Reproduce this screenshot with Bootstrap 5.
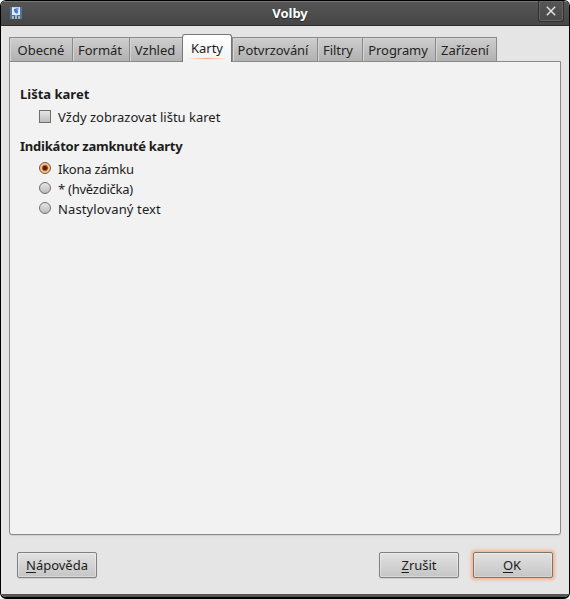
<!DOCTYPE html>
<html lang="cs">
<head>
<meta charset="utf-8">
<title>Volby</title>
<link href="https://cdn.jsdelivr.net/npm/bootstrap@5.3.0/dist/css/bootstrap.min.css" rel="stylesheet">
<style>
html{background:#fff}
body{background:transparent;font:13px/20px "Noto Sans","Open Sans",sans-serif;color:#1c1c1c}
.window{width:570px;height:599px;background:#e5e5e5;border:1px solid #000;border-bottom-width:2px;border-radius:6px}
.titlebar{height:25px;flex:none;background:linear-gradient(#555,#464646);border-top:1px solid #777;border-bottom:1px solid #2e2e2e}
.titlebar h1{font-size:13px;font-weight:700;line-height:23px;color:#fff;text-shadow:0 1px 1px #222;padding-left:10px}
.app-icon{left:8px;top:4px}
.close-btn{right:5px;top:-1px;width:26px;height:21px;padding:0;border:1px solid #303030;border-top:0;border-radius:0 0 3px 3px;background:transparent;box-shadow:inset 0 0 0 1px #646464}
.close-btn svg{display:block;margin:5px auto}
.main-area{padding:8px 8px 0}
.nav-tabs{height:28px;border:0;position:relative;z-index:1}
.nav-tabs .nav-item{flex:none}
.nav-tabs .nav-link{width:100%;height:25px;padding:0 2px 0 0;margin:0;line-height:24px;letter-spacing:-.05px;text-align:center;white-space:nowrap;color:#242424;border:1px solid #8a8a8a;border-right:0;border-radius:0;background:linear-gradient(#cecece,#b1b1b1);box-shadow:inset 1px 1px #d5d5d5}
.nav-tabs .nav-item:first-child .nav-link{padding-right:0}
.nav-tabs .w-e .nav-link,.nav-tabs .w-f .nav-link{padding-right:4px}
.nav-tabs .nav-item:last-child .nav-link{border-right:1px solid #8a8a8a}
.nav-tabs .nav-link.active{height:28px;line-height:27px;padding:0;color:#1c1c1c;background:linear-gradient(#fff,#f2f2f2);border:1px solid #777;border-bottom:0;border-radius:3px 3px 0 0;box-shadow:none;position:relative}
.nav-tabs .nav-link.active::after{content:"";position:absolute;left:4px;right:4px;bottom:3px;height:1px;background:linear-gradient(90deg,transparent,#ff9f85 50%,transparent)}
.w-a{width:63px}.w-b{width:57px}.w-c{width:53px}.w-d{width:50px}.w-e{width:85px}.w-f{width:45px}.w-g{width:73px}.w-h{width:62px}
.panel{height:474px;margin-top:-1px;padding:22px 10px;background:#f2f2f2;border:1px solid #8a8a8a;border-radius:0 0 3px 3px;box-shadow:0 1px 1px #cfcfcf}
.panel h2{font-size:13px;font-weight:700;line-height:20px;margin:0}
.panel h2.mt-2{padding-top:1px;letter-spacing:-.22px}
.option{height:20px;padding-left:19px;gap:7px}
.option-first{margin-top:3px}
.tight{letter-spacing:-.25px}.wide{letter-spacing:.12px}
.form-check-input{width:12px;height:12px;margin:0;flex:none;border:1px solid #6e6e6e;background:linear-gradient(#e6e6e6,#bdbdbd);position:relative;top:-1px}
.form-check-input[type=checkbox]{border-radius:0;height:13px;top:-.5px}
.form-check-input[type=radio]:checked{border-color:#6e5a50;background:radial-gradient(circle,#4f1e0a 0 1.5px,#a85524 2.6px,#ffc182 3.6px,#f9b980)}
.dialog-btn{width:80px;height:26px;padding:0;font-size:13px;line-height:24px;color:#1c1c1c;border:1px solid #808080;border-radius:2px;background:linear-gradient(#e2e2e2,#c5c5c5);box-shadow:inset 0 0 0 1px rgba(255,255,255,.35),0 1px 1px #d0d0d0}
.dialog-btn u{text-underline-offset:2px}
.dialog-btn.default{padding-right:2px;border-color:#7c7672;box-shadow:inset 0 0 0 1px rgba(255,255,255,.3),0 0 3px 1.5px #f7b58e}
.actions{padding:17px 8px 0;gap:14px}
.bottom-edge{height:3px;flex:none;background:#555}
</style>
</head>
<body>
<div class="window d-flex flex-column overflow-hidden">
  <header class="titlebar position-relative">
    <svg class="app-icon position-absolute" width="14" height="14" viewBox="0 0 14 14"><path fill="#4b76a8" d="M1 1h12v12H1z"/><path fill="#e6edf8" d="M3 1h8v8H3z"/><path fill="#d6c8cc" d="M3 1h8v1H3z"/><path d="M9.5 3C6.500 2.500 5.500 3.500 6 5.200S8.200 6.500 8.500 7.500M5 3.500l4 2" fill="none" stroke="#3c70e4" stroke-width="1.400"/><path fill="#a9b7c4" d="M3 10h2v3H3zM6 9h2v4H6zM9 10h2v3H9z"/><path fill="#405b78" d="M5 10h1v3H5zM8 10h1v3H8z"/></svg>
    <h1 class="m-0 text-center">Volby</h1>
    <button class="close-btn position-absolute" aria-label="Zavřít"><svg width="10" height="10" viewBox="0 0 10 10"><path d="M.8.8l8.4 8.4M9.2.8L.8 9.2" stroke="#e2e2e2" stroke-width="1.5"/></svg></button>
  </header>
  <main class="main-area flex-grow-1">
    <ul class="nav nav-tabs flex-nowrap align-items-end">
      <li class="nav-item w-a"><a class="nav-link">Obecné</a></li>
      <li class="nav-item w-b"><a class="nav-link">Formát</a></li>
      <li class="nav-item w-c"><a class="nav-link">Vzhled</a></li>
      <li class="nav-item w-d"><a class="nav-link active">Karty</a></li>
      <li class="nav-item w-e"><a class="nav-link">Potvrzování</a></li>
      <li class="nav-item w-f"><a class="nav-link">Filtry</a></li>
      <li class="nav-item w-g"><a class="nav-link">Programy</a></li>
      <li class="nav-item w-h"><a class="nav-link">Zařízení</a></li>
    </ul>
    <section class="panel">
      <h2>Lišta karet</h2>
      <label class="option option-first d-flex align-items-center"><input class="form-check-input" type="checkbox"><span>Vždy zobrazovat lištu karet</span></label>
      <h2 class="mt-2">Indikátor zamknuté karty</h2>
      <label class="option option-first d-flex align-items-center"><input class="form-check-input" type="radio" name="lock" checked><span class="tight">Ikona zámku</span></label>
      <label class="option d-flex align-items-center"><input class="form-check-input" type="radio" name="lock"><span class="tight">* (hvězdička)</span></label>
      <label class="option d-flex align-items-center"><input class="form-check-input" type="radio" name="lock"><span class="wide">Nastylovaný text</span></label>
    </section>
    <div class="actions d-flex">
      <button class="btn dialog-btn me-auto"><u>N</u>ápověda</button>
      <button class="btn dialog-btn"><u>Z</u>rušit</button>
      <button class="btn dialog-btn default"><u>O</u>K</button>
    </div>
  </main>
  <div class="bottom-edge"></div>
</div>
<script src="https://cdn.jsdelivr.net/npm/bootstrap@5.3.0/dist/js/bootstrap.bundle.min.js"></script>
</body>
</html>
